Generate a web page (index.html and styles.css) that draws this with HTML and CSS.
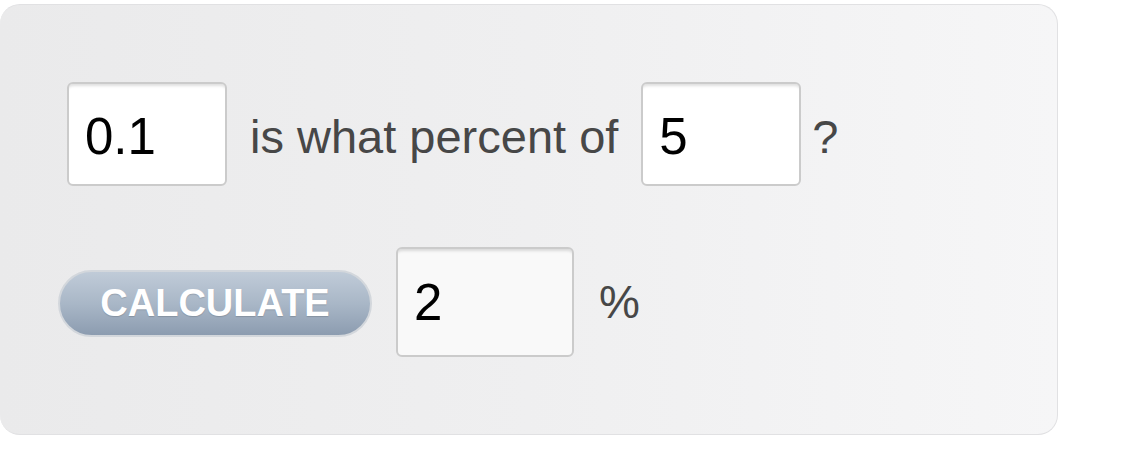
FILE: index.html
```html
<!DOCTYPE html>
<html>
<head>
<meta charset="utf-8">
<link rel="stylesheet" href="styles.css">
</head>
<body>
<div class="panel">
  <div class="row row-question">
    <input class="field" type="text" value="0.1">
    <span class="label">is what percent of</span>
    <input class="field" type="text" value="5">
    <span class="label label-q">?</span>
  </div>
  <div class="row row-result">
    <button class="calc">CALCULATE</button>
    <input class="field field-result" type="text" value="2">
    <span class="label label-pct">%</span>
  </div>
</div>
</body>
</html>
```
FILE: styles.css
```css
html, body {
  margin: 0;
  padding: 0;
  background: #ffffff;
}
body {
  font-family: "Liberation Sans", Arial, sans-serif;
}
.panel {
  box-sizing: border-box;
  margin-top: 4px;
  width: 1058px;
  height: 431px;
  border: 1px solid #e1e1e3;
  border-left: none;
  border-radius: 20px;
  background: linear-gradient(to right, #eaeaeb 0%, #efeff0 50%, #f6f6f7 100%);
  padding: 77px 0 0 67px;
}
.row {
  display: flex;
  align-items: center;
}
.row-result {
  margin-top: 61px;
  margin-left: -9px;
}
.field {
  box-sizing: border-box;
  width: 160px;
  height: 104px;
  border: 2px solid #cbcbcb;
  border-radius: 6px;
  background: #ffffff;
  box-shadow: inset 0 5px 3px -3px rgba(0, 0, 0, 0.13);
  font-family: "Liberation Sans", Arial, sans-serif;
  font-size: 51px;
  color: #000000;
  padding: 4px 0 0 16px;
  margin: 0;
  outline: none;
}
.field-result {
  width: 178px;
  height: 110px;
  background: #f9f9f9;
  margin-left: 24px;
  padding-top: 0;
}
.label {
  font-size: 47px;
  color: #474747;
  margin: 4px 23px 0 23px;
}
.label-q {
  margin: 4px 0 0 11px;
}
.label-pct {
  margin: 0 0 0 25px;
  font-size: 46px;
}
.calc {
  box-sizing: border-box;
  width: 314px;
  height: 67px;
  border: 2px solid #d3d7dc;
  border-radius: 34px;
  background: linear-gradient(to bottom, #c0cbd8 0%, #a9b7c7 50%, #8c9cb0 100%);
  color: #ffffff;
  font-family: "Liberation Sans", Arial, sans-serif;
  font-weight: bold;
  font-size: 38px;
  letter-spacing: 0;
  padding: 0;
  margin: 3px 0 0 0;
  text-shadow: 0 1px 1px rgba(0, 0, 0, 0.15);
}
```
